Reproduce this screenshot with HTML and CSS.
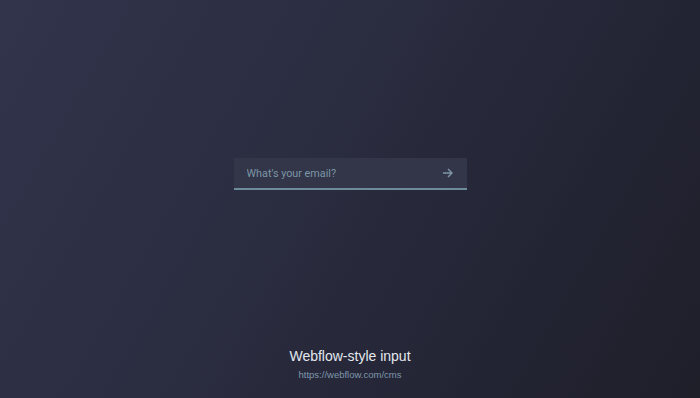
FILE: index.html
```html
<!DOCTYPE html>
<html>
<head>
<meta charset="utf-8">
<link rel="stylesheet" href="styles.css">
</head>
<body>
<main class="page">
  <div class="stage">
    <form class="webflow-input">
      <input class="field" type="email" placeholder="What's your email?">
      <button class="submit" type="button" aria-label="Submit">
        <svg width="11" height="10" viewBox="0 0 11 10"><path d="M1 5h9M6 1l4 4-4 4" fill="none" stroke="#7f95a8" stroke-width="1.4"/></svg>
      </button>
    </form>
  </div>
  <footer class="credit">
    <h1 class="title">Webflow-style input</h1>
    <a class="link" href="#">https://webflow.com/cms</a>
  </footer>
</main>
</body>
</html>
```
FILE: styles.css
```css
html, body { margin: 0; height: 100%; }
body {
  background: linear-gradient(120deg, #31344b 0%, #2b2d41 40%, #242535 70%, #1f1f2a 100%);
  font-family: "Liberation Sans", Arial, sans-serif;
  overflow: hidden;
}
.page {
  height: 398px;
  display: flex;
  flex-direction: column;
  align-items: center;
}
.stage {
  padding-top: 158px;
}
.webflow-input {
  width: 233px;
  height: 30px;
  box-sizing: content-box;
  background: #333549;
  border-bottom: 2px solid #6d8c9b;
  display: flex;
  align-items: center;
  margin: 0;
}
.field {
  flex: 1;
  background: transparent;
  border: 0;
  outline: 0;
  padding: 0 0 0 13px;
  font-family: Roboto, "Liberation Sans", sans-serif;
  font-size: 10.8px;
  color: #8fa5b6;
  height: 30px;
}
.field::placeholder { color: #7b95a6; }
.submit {
  background: transparent;
  border: 0;
  padding: 0;
  width: 30px;
  margin-right: 4px;
  display: flex;
  align-items: center;
  justify-content: center;
  height: 30px;
}
.credit {
  margin-top: auto;
  padding-bottom: 17px;
  display: flex;
  flex-direction: column;
  align-items: center;
}
.title {
  margin: 0;
  font-weight: normal;
  font-size: 14px;
  color: #e3e8ee;
  line-height: 18px;
}
.link {
  margin-top: 4px;
  font-size: 9.5px;
  color: #7f97ac;
  text-decoration: none;
  line-height: 12px;
}
```
